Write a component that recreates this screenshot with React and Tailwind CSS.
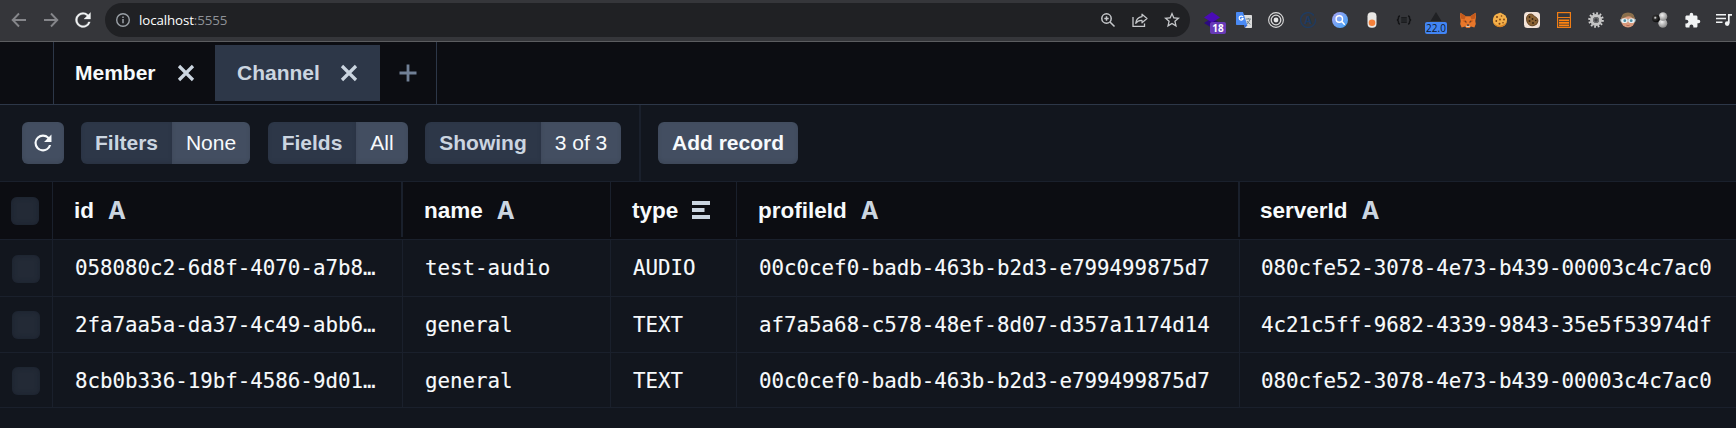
import React from "react";

const S = ({ w = 18, vb = "0 0 24 24", className = "", children }) => (
  <svg width={w} height={w} viewBox={vb} fill="none" className={"block shrink-0 " + className}>
    {children}
  </svg>
);

const RELOAD =
  "M17.65 6.35A7.958 7.958 0 0 0 12 4a8 8 0 1 0 7.73 10h-2.08A5.99 5.99 0 0 1 12 18a6 6 0 1 1 0-12c1.66 0 3.14.69 4.22 1.78L13 11h7V4l-2.35 2.35z";

/* Toolbar extensions, each centred in a 32px slot */
const Layers = () => (
  <div className="relative">
    <S w={16} vb="0 0 16 16">
      <path d="M8 6 16 11 8 16 0 11z" fill="#2b0a80" />
      <path d="M8 0 16 5.5 8 10.5 0 5.5z" fill="#4a0bb5" />
    </S>
    <span className="absolute left-[6px] top-[10px] flex h-3 w-4 items-center justify-center rounded-[2px] bg-[#673ab7] font-['Open_Sans',sans-serif] text-[10px] font-bold leading-none text-white">
      18
    </span>
  </div>
);

const Translate = () => (
  <S w={16} vb="0 0 16 16">
    <path d="M6 3h9.3q.7 0 .7.7v11.6q0 .7-.7.7H9z" fill="#dcdcdc" />
    <path d="M8 13h3.6L9 16z" fill="#3367d6" />
    <path d="M.7 0H7l4.3 13H.7Q0 13 0 12.300V.7Q0 0 .7 0z" fill="#4a8af4" />
    <path d="M7 5.200A2 2 0 1 0 7.100 6.700H5.400" stroke="#fff" strokeWidth="1.200" />
    <path d="M9.800 7h5M12.300 6v1M14 7.200q-.8 3-3.300 5M11 9q1 2 3.400 3.300" stroke="#667a84" strokeWidth=".9" />
  </S>
);

const Target = () => (
  <S w={16} vb="0 0 16 16">
    <circle cx="8" cy="8" r="7.400" stroke="#d8d8d8" strokeWidth="1.100" />
    <circle cx="8" cy="8" r="4.800" stroke="#d8d8d8" strokeWidth="1.300" />
    <circle cx="8" cy="8" r="2.400" fill="#e6e6e6" />
  </S>
);

const CircleA = () => (
  <div className="relative flex size-4 items-center justify-center font-['Open_Sans',sans-serif] text-[10.5px] font-bold leading-none text-[#1c3a62]">
    <S w={16} vb="0 0 16 16" className="absolute inset-0">
      <path d="M13.200 2.700A7.400 7.400 0 1 0 15.300 6.500" stroke="#1f3b60" strokeWidth="1.300" />
      <circle cx="13.200" cy="2.900" r=".9" fill="#1f3b60" />
    </S>
    A
  </div>
);

const Search = () => (
  <S w={16} vb="0 0 16 16">
    <defs>
      <linearGradient id="sg" x1="0" y1="0" x2="1" y2="1">
        <stop offset="0" stopColor="#a9a4f5" />
        <stop offset="1" stopColor="#3ea2f4" />
      </linearGradient>
    </defs>
    <circle cx="8" cy="8" r="8" fill="url(#sg)" />
    <circle cx="7.300" cy="7" r="3.200" stroke="#fff" strokeWidth="1.400" />
    <path d="m9.800 9.500 2.500 2.700" stroke="#fff" strokeWidth="1.500" strokeLinecap="round" />
  </S>
);

const Pill = () => (
  <S w={16} vb="0 0 16 16">
    <rect x="3.500" y=".3" width="9" height="15.400" rx="4" fill="#e9e7e4" />
    <circle cx="8" cy="10.800" r="3.300" fill="#f4803a" />
  </S>
);

const Braces = () => (
  <S w={16} vb="0 0 16 16">
    <path d="M4 4Q2.400 4 2.500 5.800T1 8q1.600.3 1.500 2.200T4 12M12 4q1.600 0 1.500 1.800T15 8q-1.600.3-1.500 2.200T12 12" stroke="#131416" strokeWidth="1.500" />
    <path d="M5.200 5.800h5.600M5.200 8h5.600M5.200 10.200h5.600" stroke="#131416" strokeWidth="1.200" />
  </S>
);

const Triangle = () => (
  <div className="relative">
    <S w={16} vb="0 0 16 16">
      <path d="M8 0 13.500 9H2.500z" fill="#202124" />
    </S>
    <span className="absolute left-[-3px] top-[10px] flex h-3 w-[22px] items-center justify-center rounded-[2px] bg-[#4285f4] font-['Open_Sans',sans-serif] text-[10px] leading-none text-[#101827]">
      22.0
    </span>
  </div>
);

const Fox = () => (
  <S w={16} vb="0 0 16 16">
    <path d="M.4.800 5.800 4.300h4.400L15.600.800 16 5l-.7 4 .5 3-1.400 3.500-3.400-.9L9.500 16h-3L5 14.600l-3.400.9L.2 12l.5-3L0 5z" fill="#e8772a" />
    <path d="M.4.800 5.800 4.300 4.500 7.500.7 6.500zM15.600.800l-5.400 3.500 1.300 3.200 3.800-1z" fill="#c35a1c" />
    <path d="M2.500 8.800 5.800 8l1 3.500zM13.500 8.800 10.200 8l-1 3.500z" fill="#c75a16" />
    <path d="m4.700 9.300 1.700.3-.2 1.200zM11.300 9.300l-1.700.3.2 1.200z" fill="#26303c" />
    <path d="M6.300 13.500h3.400l.2 1.500H6.100z" fill="#d8c7b8" />
    <path d="M6.900 12.500h2.200v1.200H6.900z" fill="#26303c" />
  </S>
);

const Cookie = () => (
  <S w={16} vb="0 0 16 16">
    <path d="M8 .8q1.500-.3 2 1 1.200-.3 2 1 2 .4 2.200 2.500 1.200 1.200.8 3-.3 5-4.500 6.300Q6 15.800 3 13.300.3 10.800 1 7q.8-4.700 5-5.600z" fill="#f3b04a" />
    <path d="M1 7q0 5 4.700 6.600 4.800.8 8.800-3.600-1.200 4-4.800 5-4.700.8-7.200-2.500Q.7 10.300 1 7z" fill="#d98324" />
    <g fill="#7a3f12">
      <circle cx="5" cy="5" r="1" /><circle cx="9.500" cy="4" r=".8" /><circle cx="8" cy="7.500" r=".9" />
      <circle cx="12" cy="7.500" r=".9" /><circle cx="4.300" cy="9" r=".9" /><circle cx="7.500" cy="11.700" r="1" /><circle cx="11" cy="10.800" r=".8" />
    </g>
  </S>
);

const CookieTile = () => (
  <S w={16} vb="0 0 16 16">
    <rect width="16" height="16" rx="3.500" fill="#f3e3d8" />
    <path d="M5 2.300q2.400-1 4.500 1 1.200 1.300 2.500 2 2 1 2 3.700-.5 4.300-5 4.800-4.500.2-6-4Q1.300 4.300 5 2.300z" fill="#8a6234" stroke="#5b3c1b" strokeWidth=".9" />
    <g fill="#35220f">
      <circle cx="5.500" cy="5" r=".9" /><circle cx="8.500" cy="7" r=".9" /><circle cx="5.500" cy="9" r="1" />
      <circle cx="9" cy="11" r=".9" /><circle cx="11.700" cy="8.500" r=".8" />
    </g>
  </S>
);

const Rows = () => (
  <S w={16} vb="0 0 16 16">
    <rect x="1.600" y=".6" width="12.800" height="14.800" stroke="#ef7d15" strokeWidth="1.200" />
    <path d="M2 5.500h12" stroke="#ef7d15" strokeWidth="1" />
    <path d="M3 8.300h10M3 10.900h10M3 13.300h10" stroke="#ff8410" strokeWidth="1.700" />
  </S>
);

const Gear = () => (
  <S w={16} vb="0 0 16 16">
    <circle cx="8" cy="8" r="6.600" stroke="#cfcfcf" strokeWidth="2.400" strokeDasharray="1.728 1.728" />
    <circle cx="8" cy="8" r="4.500" stroke="#c4c4c4" strokeWidth="3" />
    <circle cx="8" cy="8" r="3" fill="#707173" />
    <circle cx="8" cy="8" r="1.700" fill="#3f4044" />
  </S>
);

const Face = () => (
  <S w={16} vb="0 0 16 16">
    <circle cx="8" cy="8.500" r="7" fill="#d99a7c" />
    <path d="M1.300 7Q1.500.6 8 .6T14.700 7l-2.200-.8Q11 3.500 7 4.500 4 5.500 1.300 7z" fill="#8a6f4c" />
    <path d="M0 7h16v2.500H0z" fill="#7d8b90" />
    <ellipse cx="4.500" cy="8.700" rx="3.300" ry="2.400" fill="#e8f0f2" />
    <ellipse cx="11.500" cy="8.700" rx="3.300" ry="2.400" fill="#e8f0f2" />
    <circle cx="4.800" cy="8.700" r="1.400" fill="#4c8ea5" />
    <circle cx="11.200" cy="8.700" r="1.400" fill="#4c8ea5" />
    <path d="M6.300 13.200q1.700.8 3.400 0" stroke="#a8604f" strokeWidth=".8" />
  </S>
);

const Spheres = () => (
  <S w={16} vb="0 0 16 16">
    <defs>
      <radialGradient id="b1" cx=".4" cy=".35" r=".7"><stop offset="0" stopColor="#f2f2f2" /><stop offset="1" stopColor="#828282" /></radialGradient>
      <radialGradient id="b2" cx=".4" cy=".4" r=".6"><stop offset="0" stopColor="#f5f5f5" /><stop offset=".35" stopColor="#333" /><stop offset="1" stopColor="#080808" /></radialGradient>
    </defs>
    <circle cx="10.800" cy="11.200" r="4.500" fill="url(#b1)" />
    <circle cx="11" cy="4.500" r="4.300" fill="url(#b1)" />
    <circle cx="4" cy="6.500" r="3.800" fill="url(#b2)" />
  </S>
);

const Puzzle = () => (
  <S w={17}>
    <path
      fill="#f1f3f4"
      d="M20.500 11H19V7c0-1.100-.9-2-2-2h-4V3.500a2.500 2.500 0 0 0-5 0V5H4c-1.100 0-1.990.9-1.990 2v3.800H3.500c1.490 0 2.700 1.210 2.700 2.700s-1.210 2.700-2.700 2.700H2V20c0 1.100.9 2 2 2h3.800v-1.500c0-1.490 1.210-2.700 2.700-2.700s2.700 1.210 2.700 2.700V22H17c1.100 0 2-.9 2-2v-4h1.500a2.500 2.500 0 0 0 0-5z"
    />
  </S>
);

const Queue = () => (
  <S w={16} vb="0 0 16 16">
    <path d="M0 2.800h10M0 6.500h10M0 10.200h6.500" stroke="#f1f3f4" strokeWidth="1.500" />
    <path d="M12.800 11V2.800H16" stroke="#f1f3f4" strokeWidth="1.700" />
    <circle cx="11.200" cy="11.600" r="2.300" fill="#f1f3f4" />
  </S>
);

const extensions = [
  Layers, Translate, Target, CircleA, Search, Pill, Braces, Triangle, Fox,
  Cookie, CookieTile, Rows, Gear, Face, Spheres, Puzzle, Queue,
];

function BrowserBar() {
  return (
    <div className="flex h-[42px] items-start border-b border-[#5c5d60] bg-[#35363a] pt-[3px]">
      <div className="flex h-[34px] w-[105px] shrink-0 items-center gap-4 pl-[11px] text-[#85868a]">
        <S w={16} vb="0 0 16 16"><path d="M15 8H2M8 1.500 1.700 8 8 14.500" stroke="currentColor" strokeWidth="1.900" /></S>
        <S w={16} vb="0 0 16 16"><path d="M1 8h13M8 1.500 14.300 8 8 14.500" stroke="currentColor" strokeWidth="1.900" /></S>
        <S w={16} vb="3.500 3.500 17 17"><path d={RELOAD} fill="#f1f3f4" stroke="#f1f3f4" strokeWidth=".3" /></S>
      </div>
      <div className="flex h-[34px] w-[1085px] shrink-0 items-center rounded-full bg-[#202124] pl-[11px] pr-[10px]">
        <S w={14} vb="0 0 14 14">
          <circle cx="7" cy="7" r="6.300" stroke="#9aa0a6" strokeWidth="1.400" />
          <path d="M7 6v4.300M7 3.500v1.500" stroke="#9aa0a6" strokeWidth="1.500" />
        </S>
        <div className="ml-[9px] pt-px font-['Open_Sans',sans-serif] text-[13.3px] tracking-[-0.1px] text-white">
          localhost<span className="text-[#8f9297]">:5555</span>
        </div>
        <div className="ml-auto flex items-center gap-4 text-[#c6c8cb]">
          <S w={16} vb="0 0 16 16">
            <circle cx="6.500" cy="6.500" r="4.700" stroke="currentColor" strokeWidth="1.500" />
            <path d="m10 10 4.500 4.500M6.500 4.300v4.400M4.300 6.500h4.400" stroke="currentColor" strokeWidth="1.500" />
          </S>
          <S w={16} vb="0 0 16 16">
            <path d="M1 5v9.300h11.500V11.500" stroke="currentColor" strokeWidth="1.300" />
            <path d="M10 2.200 15 6.500l-5 4.300V8.300Q6 8 3.700 11.300 4.300 5.500 10 4.700z" stroke="currentColor" strokeWidth="1.200" strokeLinejoin="round" />
          </S>
          <S w={16} vb="2 2 20 20">
            <path fill="currentColor" d="m22 9.240-7.190-.62L12 2 9.190 8.630 2 9.240l5.460 4.730L5.820 21 12 17.270 18.180 21l-1.630-7.030L22 9.240zM12 15.400l-3.760 2.270 1-4.280-3.320-2.880 4.380-.38L12 6.100l1.710 4.040 4.380.38-3.320 2.880 1 4.280L12 15.400z" />
          </S>
        </div>
      </div>
      <div className="ml-[6px] flex h-[34px] shrink-0">
        {extensions.map((Icon, i) => (
          <div key={i} className="flex w-8 shrink-0 items-center justify-center"><Icon /></div>
        ))}
      </div>
    </div>
  );
}

const Close = () => (
  <S w={18} vb="0 0 18 18">
    <path d="m2 2 14 14M16 2 2 16" stroke="#cbd5e0" strokeWidth="3.200" />
  </S>
);

function Tabs() {
  return (
    <div className="flex h-[63px] border-b border-[#2d3748] bg-[#0c0d12] pl-[53px] text-[21px] font-bold leading-none">
      <div className="flex w-[384px] items-center border-x border-[#2d3748]">
        <div className="flex h-14 w-[161px] items-center justify-between pl-[21px] pr-5 text-[#f7fafc]">
          <span className="pb-[2px]">Member</span> <Close />
        </div>
        <div className="flex h-14 w-[165px] items-center justify-between bg-[#2d3748] pl-[22px] pr-[22px] text-[#cbd5e0]">
          <span className="pb-[2px]">Channel</span> <Close />
        </div>
        <S w={18} vb="0 0 18 18" className="ml-[19px]">
          <path d="M9 .5v17M.5 9h17" stroke="#718096" strokeWidth="2.800" />
        </S>
      </div>
    </div>
  );
}

const Split = ({ label, value, className, left, right }) => (
  <div className={"flex h-[42px] overflow-hidden rounded-md leading-none " + className}>
    <div className={"flex items-center justify-center bg-[#2d3748] pb-px font-bold text-[#cbd5e0] shadow-[inset_0_-2px_4px_rgba(0,0,0,0.1)] " + left}>{label}</div>
    <div className={"flex items-center justify-center bg-[#434e61] pb-px text-[#f7fafc] shadow-[inset_0_-2px_4px_rgba(0,0,0,0.1)] " + right}>{value}</div>
  </div>
);

function Toolbar() {
  return (
    <div className="flex h-[77px] border-b border-[#1a202c] bg-[#12161e] text-[21px]">
      <div className="flex w-[641px] border-r-2 border-[#1a202c] pl-[22px] pt-[17px]">
        <div className="flex size-[42px] items-center justify-center rounded-md bg-[#434e61] shadow-[inset_0_-2px_4px_rgba(0,0,0,0.1)]">
          <S w={18} vb="3.500 3.500 17 17"><path d={RELOAD} fill="#f7fafc" /></S>
        </div>
        <Split label="Filters" value="None" className="ml-[17px]" left="w-[91px]" right="w-[78px]" />
        <Split label="Fields" value="All" className="ml-[18px]" left="w-[88px]" right="w-[52px]" />
        <Split label="Showing" value="3 of 3" className="ml-[17px]" left="w-[116px]" right="w-[80px]" />
      </div>
      <div className="ml-[17px] mt-[17px] flex h-[42px] w-[140px] items-center justify-center rounded-md bg-[#434e61] pb-px font-bold leading-none text-[#f7fafc] shadow-[inset_0_-2px_4px_rgba(0,0,0,0.1)]">
        Add record
      </div>
    </div>
  );
}

const GRID = "grid grid-cols-[53px_350px_208px_126px_503px_1fr] ";

const Box = () => (
  <div className="size-7 rounded-md bg-[#232a36] shadow-[inset_0_0_5px_rgba(26,32,44,0.9)]" />
);

const columns = [
  { name: "id", border: "border-r-2 pl-[21px]" },
  { name: "name", border: "border-r pl-[21px]" },
  { name: "type", border: "border-r pl-[21px]", list: true },
  { name: "profileId", border: "border-r-2 pl-[21px]" },
  { name: "serverId", border: "pl-5" },
];

const rows = [
  { h: "h-[57px]", pad: "pt-px", cells: ["058080c2-6d8f-4070-a7b8…", "test-audio", "AUDIO", "00c0cef0-badb-463b-b2d3-e799499875d7", "080cfe52-3078-4e73-b439-00003c4c7ac0"] },
  { h: "h-14", pad: "pt-[2px]", cells: ["2fa7aa5a-da37-4c49-abb6…", "general", "TEXT", "af7a5a68-c578-48ef-8d07-d357a1174d14", "4c21c5ff-9682-4339-9843-35e5f53974df"] },
  { h: "h-[55px]", pad: "pt-[2px]", cells: ["8cb0b336-19bf-4586-9d01…", "general", "TEXT", "00c0cef0-badb-463b-b2d3-e799499875d7", "080cfe52-3078-4e73-b439-00003c4c7ac0"] },
];

function Table() {
  return (
    <div>
      <div className={GRID + "h-[58px] border-b border-[#1a202c] bg-[#0c0d12]"}>
        <div className="flex items-center border-r border-[#1a202c] pl-[11px]"><Box /></div>
        {columns.map((c) => (
          <div key={c.name} className={"mb-[2px] flex items-center border-[#1a202c] pt-1 text-[22.5px] font-bold leading-none text-[#f7fafc] " + c.border}>
            {c.name}
            {c.list ? (
              <S w={18} vb="0 0 18 18" className="mb-[3px] ml-[14px]">
                <path d="M0 2h18M0 9h12.500M0 16h18" stroke="#cbd5e0" strokeWidth="3.800" />
              </S>
            ) : (
              <span className="mb-px ml-[14px] font-[Inter,sans-serif] text-[24px] leading-none text-[#cbd5e0]">A</span>
            )}
          </div>
        ))}
      </div>
      {rows.map((r, i) => (
        <div key={i} className={GRID + "border-b border-[#1a202c] " + r.h}>
          <div className="flex items-center border-r border-[#1a202c] pl-3 pt-px"><Box /></div>
          {r.cells.map((t, j) => (
            <div key={j} className={"flex items-center whitespace-nowrap border-[#1a202c] font-['DejaVu_Sans_Mono',monospace] text-[20.8px] leading-none text-[#f7fafc] [-webkit-text-stroke:0.12px_#f7fafc] " + r.pad + (j < 4 ? " border-r pl-[22px]" : " pl-[21px]")}>
              {t}
            </div>
          ))}
        </div>
      ))}
    </div>
  );
}

export default function App() {
  return (
    <div className="h-[428px] w-[1736px] overflow-hidden bg-[#12161e] font-['Liberation_Sans',Arial,sans-serif]">
      <BrowserBar />
      <Tabs />
      <Toolbar />
      <Table />
    </div>
  );
}
